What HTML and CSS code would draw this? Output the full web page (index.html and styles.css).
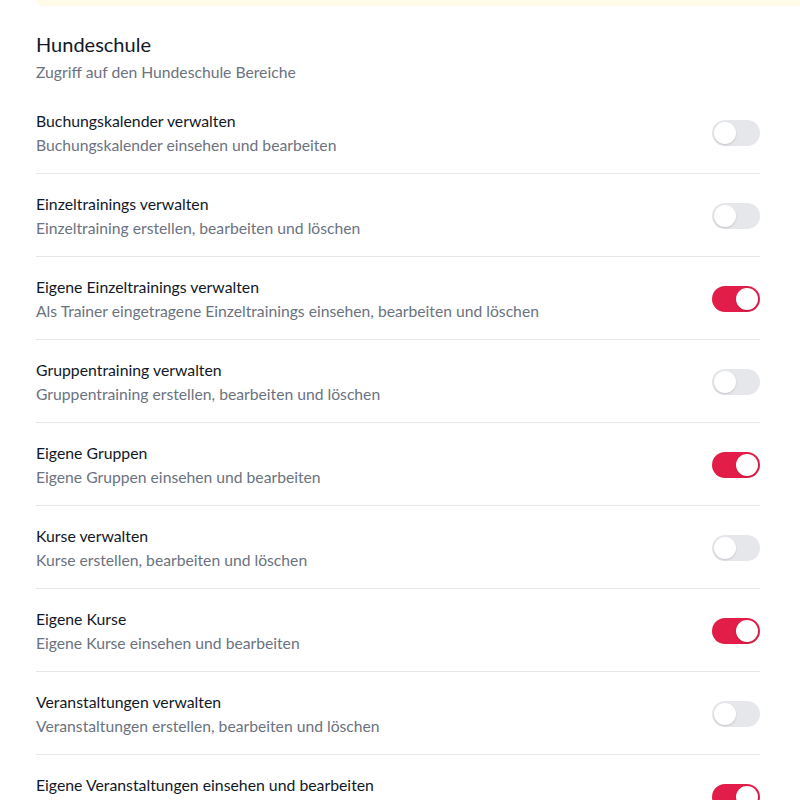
FILE: index.html
```html
<!DOCTYPE html>
<html lang="de">
<head>
    <meta charset="UTF-8">
    <meta name="viewport" content="width=device-width, initial-scale=1.0">
    <title>Berechtigungen</title>
    <link rel="stylesheet" href="styles.css">
</head>
<body>
    <div class="page">
        <div class="notice"></div>

        <div class="section-header">
            <h2>Hundeschule</h2>
            <p>Zugriff auf den Hundeschule Bereiche</p>
        </div>

        <ul class="permission-list">
            <li class="permission">
                <div class="permission-text">
                    <div class="permission-title">Buchungskalender verwalten</div>
                    <div class="permission-desc">Buchungskalender einsehen und bearbeiten</div>
                </div>
                <label class="toggle"><input type="checkbox"><span class="toggle-slider"></span></label>
            </li>
            <li class="permission">
                <div class="permission-text">
                    <div class="permission-title">Einzeltrainings verwalten</div>
                    <div class="permission-desc">Einzeltraining erstellen, bearbeiten und löschen</div>
                </div>
                <label class="toggle"><input type="checkbox"><span class="toggle-slider"></span></label>
            </li>
            <li class="permission">
                <div class="permission-text">
                    <div class="permission-title">Eigene Einzeltrainings verwalten</div>
                    <div class="permission-desc">Als Trainer eingetragene Einzeltrainings einsehen, bearbeiten und löschen</div>
                </div>
                <label class="toggle"><input type="checkbox" checked><span class="toggle-slider"></span></label>
            </li>
            <li class="permission">
                <div class="permission-text">
                    <div class="permission-title">Gruppentraining verwalten</div>
                    <div class="permission-desc">Gruppentraining erstellen, bearbeiten und löschen</div>
                </div>
                <label class="toggle"><input type="checkbox"><span class="toggle-slider"></span></label>
            </li>
            <li class="permission">
                <div class="permission-text">
                    <div class="permission-title">Eigene Gruppen</div>
                    <div class="permission-desc">Eigene Gruppen einsehen und bearbeiten</div>
                </div>
                <label class="toggle"><input type="checkbox" checked><span class="toggle-slider"></span></label>
            </li>
            <li class="permission">
                <div class="permission-text">
                    <div class="permission-title">Kurse verwalten</div>
                    <div class="permission-desc">Kurse erstellen, bearbeiten und löschen</div>
                </div>
                <label class="toggle"><input type="checkbox"><span class="toggle-slider"></span></label>
            </li>
            <li class="permission">
                <div class="permission-text">
                    <div class="permission-title">Eigene Kurse</div>
                    <div class="permission-desc">Eigene Kurse einsehen und bearbeiten</div>
                </div>
                <label class="toggle"><input type="checkbox" checked><span class="toggle-slider"></span></label>
            </li>
            <li class="permission">
                <div class="permission-text">
                    <div class="permission-title">Veranstaltungen verwalten</div>
                    <div class="permission-desc">Veranstaltungen erstellen, bearbeiten und löschen</div>
                </div>
                <label class="toggle"><input type="checkbox"><span class="toggle-slider"></span></label>
            </li>
            <li class="permission">
                <div class="permission-text">
                    <div class="permission-title">Eigene Veranstaltungen einsehen und bearbeiten</div>
                    <div class="permission-desc">Als Trainer eingetragene Veranstaltungen einsehen und bearbeiten</div>
                </div>
                <label class="toggle"><input type="checkbox" checked><span class="toggle-slider"></span></label>
            </li>
        </ul>
    </div>
</body>
</html>
```

FILE: styles.css
```css
* {
    margin: 0;
    padding: 0;
    box-sizing: border-box;
}

body {
    font-family: Lato, "Open Sans", sans-serif;
    background: white;
    color: #111827;
    overflow: hidden;
}

.page {
    padding: 0 40px 0 36px;
}

/* yellow info box, only its bottom edge is visible */
.notice {
    height: 6px;
    margin-right: -40px;
    background: #fefbe8;
    border-radius: 0 0 0 8px;
}

.section-header {
    padding-top: 24px;
}

.section-header h2 {
    font-size: 20px;
    font-weight: 400;
    line-height: 28px;
    color: #111827;
}

.section-header p {
    margin-top: 2px;
    font-size: 15.7px;
    line-height: 24px;
    color: #6b7280;
}

.permission-list {
    list-style: none;
    margin-top: 7px;
}

.permission {
    display: flex;
    align-items: center;
    justify-content: space-between;
    padding: 18px 0 16px;
    border-bottom: 1px solid #e5e7eb;
}

.permission-title {
    font-size: 15.8px;
    line-height: 24px;
    color: #111827;
}

.permission-desc {
    font-size: 15.7px;
    line-height: 24px;
    color: #6b7280;
}

/* switch */
.toggle {
    position: relative;
    display: inline-block;
    flex-shrink: 0;
    width: 48px;
    height: 26px;
}

.toggle input {
    opacity: 0;
    width: 0;
    height: 0;
}

.toggle-slider {
    position: absolute;
    top: 0;
    left: 0;
    right: 0;
    bottom: 0;
    background-color: #e5e7eb;
    border-radius: 26px;
    cursor: pointer;
    transition: .2s;
}

.toggle-slider:before {
    position: absolute;
    content: "";
    width: 22px;
    height: 22px;
    left: 2px;
    top: 2px;
    background: white;
    border-radius: 50%;
    box-shadow: 0 1px 2px rgba(0, 0, 0, 0.15);
    transition: .2s;
}

.toggle input:checked + .toggle-slider {
    background-color: #e11d48;
}

.toggle input:checked + .toggle-slider:before {
    transform: translateX(22px);
}
```
